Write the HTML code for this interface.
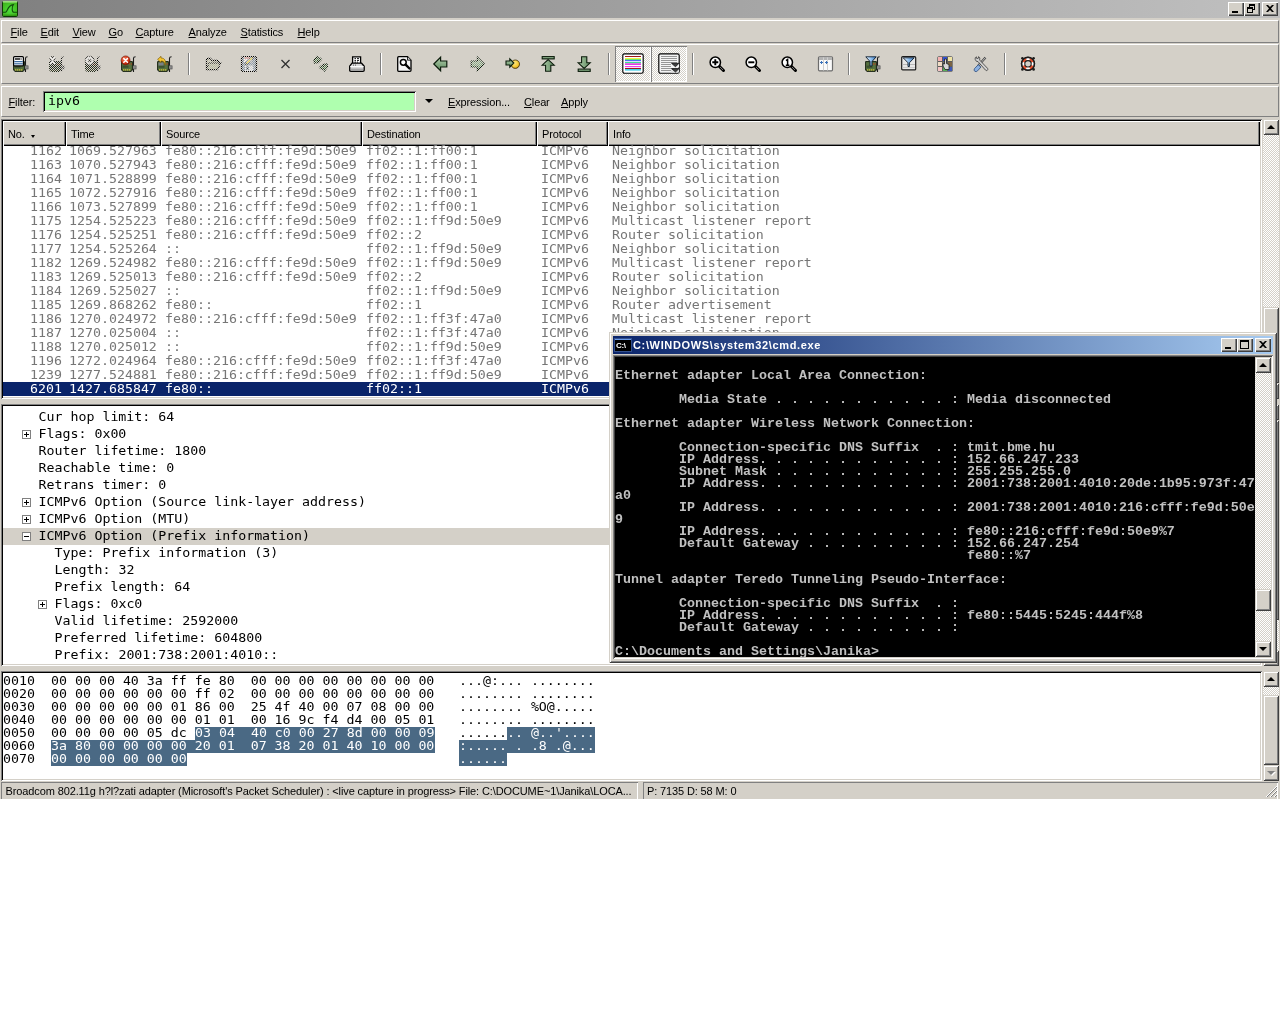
<!DOCTYPE html>
<html><head><meta charset="utf-8"><title>Wireshark</title>
<style>
*{box-sizing:border-box;margin:0;padding:0}
html,body{width:1280px;height:1024px;overflow:hidden;background:#fff}
#root{position:absolute;left:0;top:0;width:1280px;height:1024px;will-change:transform}
body{position:relative;font-family:"Liberation Sans",sans-serif;font-size:11px;color:#000}
.a{position:absolute}
.ui{font-family:"Liberation Sans",sans-serif;font-size:11px;line-height:13px;white-space:pre;letter-spacing:-.13px}
.mono{font-family:"DejaVu Sans Mono","Liberation Mono",monospace;font-size:13.288px;white-space:pre;line-height:14px;transform:scaleY(.9);transform-origin:0 50%}
.cmdt{font-family:"Liberation Mono",monospace;font-weight:bold;font-size:13.33px;line-height:12px;white-space:pre;color:#c0c0c0}
u{text-decoration:underline;text-underline-offset:1px}
.hl{position:absolute;height:1px;left:0;right:0}
.btn{background:#d4d0c8;box-shadow:inset 1px 1px 0 #fff,inset -1px -1px 0 #404040,inset -2px -2px 0 #808080}
.sbtn{background:#d4d0c8;box-shadow:inset 1px 1px 0 #d4d0c8,inset -1px -1px 0 #404040,inset 2px 2px 0 #fff,inset -2px -2px 0 #808080}
.chk{background-color:#fff;background-image:conic-gradient(#d4d0c8 25%,#fff 0 50%,#d4d0c8 0 75%,#fff 0);background-size:2px 2px}
.sunk{box-shadow:inset 1px 1px 0 #808080,inset -1px -1px 0 #fff,inset 2px 2px 0 #000,inset -2px -2px 0 #d4d0c8}
.hdr{position:absolute;top:121px;height:25px;background:#d4d0c8;box-shadow:inset 1px 1px 0 #fff,inset -1px -1px 0 #000,inset -2px -2px 0 #808080}
.hdr span{position:absolute;top:7px;left:5px}
.row{position:absolute;left:3px;width:1257px;height:14px;color:#767676}
.row span{position:absolute;top:0}
.tr{position:absolute;height:17px;line-height:17px;color:#000}
.exp{position:absolute;width:9px;height:9px;border:1px solid #808080;background:#fff}
.exp i{position:absolute;left:1px;top:3px;width:5px;height:1px;background:#000}
.exp b{position:absolute;left:3px;top:1px;width:1px;height:5px;background:#000}
.hx{position:absolute;height:13px;line-height:13px;color:#000}
.sel{background:#4a6984;color:#fff}
.sep{position:absolute;top:53px;width:2px;height:22px;border-left:1px solid #808080;border-right:1px solid #fff}
.ic{position:absolute;top:56px;width:16px;height:16px}
</style></head>
<body>
<div id="root">
<div class="a" style="left:0;top:0;width:1280px;height:799px;background:#d4d0c8"></div>
<div class="a" style="left:0;top:0;width:1280px;height:18px;background:linear-gradient(90deg,#808080,#c0c0c0)"></div>
<svg class="a" style="left:2px;top:1px" width="16" height="16" viewBox="0 0 16 16"><defs><radialGradient id="wsg" cx=".5" cy=".55" r=".6"><stop offset="0" stop-color="#4ee03c"/><stop offset="1" stop-color="#40b41c"/></radialGradient></defs><rect x=".5" y=".5" width="15" height="15" rx="1.2" fill="url(#wsg)" stroke="#0c3a04" stroke-width="1"/><rect x="1" y="0" width="14" height="1.6" fill="#9cdc80"/><rect x="1" y="13.600" width="14" height="1.400" fill="#2c8c10" opacity=".7"/><path d="M.5 11.300H3.500C5.500 11.300 5 4.500 11.300 3.600 9.500 6 10 11.300 11.800 11.300H15.500" fill="none" stroke="#14500c" stroke-width="1.100"/></svg>
<div class="a btn" style="left:1228px;top:2px;width:16px;height:14px"><div class="a" style="left:4px;top:9px;width:6px;height:2px;background:#000"></div></div>
<div class="a btn" style="left:1244px;top:2px;width:16px;height:14px"><div class="a" style="left:5px;top:2px;width:6px;height:6px;border:1px solid #000;border-top-width:2px"></div><div class="a" style="left:3px;top:5px;width:6px;height:6px;border:1px solid #000;border-top-width:2px;background:#d4d0c8"></div></div>
<div class="a btn" style="left:1262px;top:2px;width:16px;height:14px"><svg class="a" style="left:4px;top:3px" width="8" height="7" viewBox="0 0 8 7"><path d="M0 0h2l2 2 2-2h2L5 3.5 8 7H6L4 5 2 7H0l3-3.5z" fill="#000"/></svg></div>
<div class="a" style="left:1px;top:20px;width:1278px;height:23px;border-top:1px solid #fff;border-left:1px solid #fff;border-bottom:1px solid #808080;border-right:1px solid #808080"></div>
<div class="a" style="left:1px;top:44px;width:1278px;height:40px;border-top:1px solid #fff;border-left:1px solid #fff;border-bottom:1px solid #808080;border-right:1px solid #808080"></div>
<div class="a" style="left:1px;top:86px;width:1278px;height:31px;border-top:1px solid #fff;border-left:1px solid #fff;border-bottom:1px solid #808080;border-right:1px solid #808080"></div>
<div class="a ui" style="left:10.5px;top:26px"><u>F</u>ile</div>
<div class="a ui" style="left:40.5px;top:26px"><u>E</u>dit</div>
<div class="a ui" style="left:72.5px;top:26px"><u>V</u>iew</div>
<div class="a ui" style="left:108.5px;top:26px"><u>G</u>o</div>
<div class="a ui" style="left:135.5px;top:26px"><u>C</u>apture</div>
<div class="a ui" style="left:188.5px;top:26px"><u>A</u>nalyze</div>
<div class="a ui" style="left:240.5px;top:26px"><u>S</u>tatistics</div>
<div class="a ui" style="left:297.5px;top:26px"><u>H</u>elp</div>
<div class="sep" style="left:188px"></div>
<div class="sep" style="left:380px"></div>
<div class="sep" style="left:608px"></div>
<div class="sep" style="left:692px"></div>
<div class="sep" style="left:848px"></div>
<div class="sep" style="left:1004px"></div>
<div class="a chk" style="left:615px;top:46px;width:36px;height:36px;box-shadow:inset 1px 1px 0 #808080,inset -1px -1px 0 #fff"></div>
<div class="a chk" style="left:651px;top:46px;width:36px;height:36px;box-shadow:inset 1px 1px 0 #808080,inset -1px -1px 0 #fff"></div>
<svg class="a" style="left:0;top:44px" width="1280" height="40" viewBox="0 44 1280 40"><defs>
<pattern id="msk" width="2" height="2" patternUnits="userSpaceOnUse"><rect x="1" width="1" height="1" fill="#d4d0c8"/><rect y="1" width="1" height="1" fill="#d4d0c8"/></pattern>
<pattern id="stp" width="2" height="2" patternUnits="userSpaceOnUse"><rect width="1" height="1" fill="#2c2c2c"/><rect x="1" y="1" width="1" height="1" fill="#2c2c2c"/></pattern>
<pattern id="stg" width="2" height="2" patternUnits="userSpaceOnUse"><rect width="1" height="1" fill="#6f8f6f"/><rect x="1" y="1" width="1" height="1" fill="#6f8f6f"/></pattern>
<pattern id="stl" width="2" height="2" patternUnits="userSpaceOnUse"><rect width="2" height="2" fill="#e4e4dc"/><rect width="1" height="1" fill="#a8aca0"/><rect x="1" y="1" width="1" height="1" fill="#a8aca0"/></pattern>
<pattern id="stb" width="2" height="2" patternUnits="userSpaceOnUse"><rect width="2" height="2" fill="#dfe6ee"/><rect width="1" height="1" fill="#6c7c8c"/><rect x="1" y="1" width="1" height="1" fill="#6c7c8c"/></pattern>
<linearGradient id="gg" x1="0" y1="0" x2="0" y2="1"><stop offset="0" stop-color="#b4d0b0"/><stop offset=".5" stop-color="#86ab84"/><stop offset="1" stop-color="#5f8a60"/></linearGradient>
<linearGradient id="gh" x1="0" y1="0" x2="1" y2="0"><stop offset="0" stop-color="#b4d0b0"/><stop offset=".5" stop-color="#86ab84"/><stop offset="1" stop-color="#5f8a60"/></linearGradient>
<radialGradient id="rd" cx=".4" cy=".35" r=".7"><stop offset="0" stop-color="#f08060"/><stop offset=".6" stop-color="#d83818"/><stop offset="1" stop-color="#8a1808"/></radialGradient>
<radialGradient id="yl" cx=".4" cy=".35" r=".7"><stop offset="0" stop-color="#ffe880"/><stop offset=".7" stop-color="#f4c830"/><stop offset="1" stop-color="#b08010"/></radialGradient>
<linearGradient id="fl" x1="0" y1="0" x2="1" y2="0"><stop offset="0" stop-color="#f0f8ff"/><stop offset=".5" stop-color="#90c0f0"/><stop offset="1" stop-color="#3c7cc4"/></linearGradient>
<g id="nic">
 <path d="M12.5 16V2.2C12.5 1.2 13.3 .8 14.6 .8" fill="none" stroke="#1c1c1c" stroke-width="1.1"/>
 <rect x="10.5" y="9.8" width="4.6" height="3.2" fill="#8c8c8c" stroke="#4c4c4c" stroke-width=".6"/>
 <path d="M.6 5.6H11.4V14.2H10.2V15.4H1.8V14.2H.6Z" fill="#55703f" stroke="#1a2414" stroke-width="1"/>
 <rect x="1.5" y="9.6" width="6" height="2.2" fill="#3c5030"/>
 <rect x="8" y="7.4" width="1" height="1.2" fill="#c83c20"/><rect x="9.8" y="7.4" width="1" height="1.2" fill="#c83c20"/>
 <rect x="2" y="13.3" width="1.3" height="1.2" fill="#dcc83c"/><rect x="4" y="13.3" width="1.3" height="1.2" fill="#dcc83c"/><rect x="6" y="13.3" width="1.3" height="1.2" fill="#dcc83c"/><rect x="8" y="13.3" width="1.3" height="1.2" fill="#dcc83c"/>
</g>
<g id="nicd">
 <path d="M12.5 16V2.2C12.5 1.2 13.3 .8 14.6 .8" fill="none" stroke="#1c1c1c" stroke-width="1.1"/>
 <rect x="10.5" y="9.8" width="4.6" height="3.2" fill="#484848" stroke="#4c4c4c" stroke-width=".6"/>
 <path d="M.6 5.6H11.4V14.2H10.2V15.4H1.8V14.2H.6Z" fill="#2a3424" stroke="#1a2414" stroke-width="1"/>
 <rect x="1.5" y="9.6" width="6" height="2.2" fill="#1c2418"/>
 <rect x="8" y="7.4" width="1" height="1.2" fill="#7c2c1c"/><rect x="9.8" y="7.4" width="1" height="1.2" fill="#7c2c1c"/>
 <rect x="2" y="13.3" width="1.3" height="1.2" fill="#4c4828"/><rect x="4" y="13.3" width="1.3" height="1.2" fill="#4c4828"/><rect x="6" y="13.3" width="1.3" height="1.2" fill="#4c4828"/><rect x="8" y="13.3" width="1.3" height="1.2" fill="#4c4828"/>
</g>
</defs><g transform="translate(13,56)"><use href="#nic"/><rect x=".6" y=".6" width="9.8" height="9.3" rx="1" fill="#fff" stroke="#000" stroke-width="1.2"/><rect x="2" y="2" width="5.4" height="2" fill="#505050"/><rect x="8.2" y="2" width=".8" height="2" fill="#909090"/><rect x="1.2" y="5" width="8.6" height="1.2" fill="#3c6ca0"/><rect x="2" y="6.2" width="7" height=".9" fill="#c8d8e8"/><rect x="1.2" y="7.2" width="8.6" height="1.2" fill="#3c6ca0"/></g><g transform="translate(49,56)"><use href="#nicd"/><path d="M1.200 .8L5.800 8.200M5.600 .8L1.400 8.200" stroke="#202020" stroke-width="3"/><path d="M1.200 .8L5.800 8.200M5.600 .8L1.400 8.200" stroke="#f4f4f4" stroke-width="1.600"/><rect x="-1" y="-1" width="18" height="18" fill="url(#msk)"/></g><g transform="translate(85,56)"><use href="#nicd"/><circle cx="4.600" cy="4.600" r="4.400" fill="#e8e8e8" stroke="#202020" stroke-width="1"/><circle cx="4.600" cy="4.600" r="1.600" fill="#303030"/><rect x="-1" y="-1" width="18" height="18" fill="url(#msk)"/></g><g transform="translate(121,56)"><use href="#nic"/><circle cx="4.6" cy="4.4" r="4.5" fill="url(#rd)" stroke="#701808" stroke-width=".6"/><path d="M2.8 2.6L6.4 6.2M6.4 2.6L2.8 6.2" stroke="#fff" stroke-width="1.5" stroke-linecap="round"/></g><g transform="translate(157,56)"><use href="#nic"/><rect x="1.5" y="6.5" width="5" height="3" fill="#7a8088"/><path d="M.6 3.4L4 .3V2C7.5 2 9.2 4.5 8.2 9.2 7.8 6.2 6.4 5 4 5V6.6Z" fill="#f4c430" stroke="#80600c" stroke-width=".7" stroke-linejoin="round"/></g><g transform="translate(205,56)"><path d="M1.500 3.500Q1.500 2.500 2.500 2.500H5.500L7 4.500H12.500Q13.500 4.500 13.500 5.500V7H15.500L12.500 13.500H1.500Z" fill="#c8c8b0" stroke="#000" stroke-width="1.300"/><path d="M4 7H15.500L12.500 13.500H1.500Z" fill="#b4b89c" stroke="#101010" stroke-width="1"/><rect x="-1" y="-1" width="18" height="18" fill="url(#msk)"/></g><g transform="translate(241,56)"><rect x=".6" y=".6" width="14.800" height="14.800" rx="1.500" fill="#8c9cb0" stroke="#000" stroke-width="1.400"/><rect x="3" y="1.200" width="8" height="5" fill="#f4f4f4"/><path d="M3.500 2H9" stroke="#d04040" stroke-width="1"/><rect x="4" y="9.500" width="8" height="5.500" fill="#e4e8f0"/><rect x="5.500" y="10.500" width="2" height="3.500" fill="#2c3c4c"/><path d="M4.500 8.500L11.800 1.200" stroke="#202020" stroke-width="2.600"/><path d="M5.500 7.500L11.400 1.600" stroke="#f0d840" stroke-width="1"/><rect x="-1" y="-1" width="18" height="18" fill="url(#msk)"/></g><g transform="translate(277,56)"><path d="M4.500 4L12.500 12M12.500 4L4.500 12" stroke="#303030" stroke-width="1.300"/></g><g transform="translate(313,56)"><path d="M1 4L4 .5 5 2Q7.500 1.500 8.500 3.500L6.500 5.500Q5.500 4.500 4.500 5L5.500 6.500 1.500 7Z" fill="#5c8858" stroke="#081808" stroke-width="1.200"/><path d="M14.500 11L11.500 14.800 10.500 13Q8 13.500 6.500 11.500L8.500 9.500Q9.500 10.500 11 10L10 8.500 14 8Z" fill="#5c8858" stroke="#081808" stroke-width="1.200"/><rect x="-1" y="-1" width="18" height="18" fill="url(#msk)"/></g><g transform="translate(349,56)"><path d="M3.6 7V.8H11.6V7" fill="#fff" stroke="#000" stroke-width="1.3"/><path d="M5.5 2.6H7M8 2.6H10M5.5 4.4H7M8 4.4H10M5.500 6.1H7M8 6.1H9" stroke="#111" stroke-width="1"/><path d="M3 7.2H12.6L15.2 10.2V14.2Q15.2 15.3 14 15.3H1.8Q.7 15.3 .7 14.2V10.2Z" fill="#d8d8d8" stroke="#000" stroke-width="1.3" stroke-linejoin="round"/><path d="M1.2 10.6H14.6" stroke="#fff" stroke-width="1"/><path d="M2 13.2H14" stroke="#909090" stroke-width="1"/><rect x="4" y="8.6" width="1" height="1" fill="#555"/><rect x="6" y="8.600" width="1" height="1" fill="#555"/></g><g transform="translate(397,56)"><path d="M1.7.7H10.5L14 4.200V14.300Q14 15.300 13 15.300H1.700Q.7 15.300 .7 14.300V1.700Q.7.7 1.7.7Z" fill="#f4f4f4" stroke="#000" stroke-width="1.3"/><path d="M10.500 .7V4.200H14" fill="#ccc" stroke="#000" stroke-width=".8"/><circle cx="6.300" cy="6.300" r="2.900" fill="#fff" stroke="#000" stroke-width="1.500"/><path d="M8.600 8.600L12.500 12.500" stroke="#000" stroke-width="2.400" stroke-linecap="round"/></g><g transform="translate(433,56)"><path d="M.8 8L7.600 1.300V5H13.800V11H7.600V14.700Z" fill="url(#gg)" stroke="#0c1c0c" stroke-width="1.200" stroke-linejoin="miter"/></g><g transform="translate(469,56)"><path d="M15.200 8L8.400 1.300V5H2.200V11H8.400V14.700Z" fill="url(#gg)" stroke="#0c1c0c" stroke-width="1.200"/><rect x="-1" y="-1" width="18" height="18" fill="url(#msk)"/></g><g transform="translate(505,56)"><circle cx="10.300" cy="8.200" r="4.200" fill="url(#yl)" stroke="#3c2c04" stroke-width=".8"/><path d="M8.800 7L4.800 2.800V5H1V9H4.800V11.200Z" fill="url(#gg)" stroke="#0c1c0c" stroke-width="1.100"/></g><g transform="translate(541,56)"><rect x="1.200" y=".6" width="12" height="2.300" fill="url(#gg)" stroke="#0c1c0c" stroke-width="1.100"/><path d="M7.200 3.600L13.200 9.200H9.800V15.300H4.600V9.200H1.200Z" fill="url(#gh)" stroke="#0c1c0c" stroke-width="1.100"/></g><g transform="translate(577,56)"><rect x="1.200" y="13.100" width="12" height="2.300" fill="url(#gg)" stroke="#0c1c0c" stroke-width="1.100"/><path d="M7.200 12.400L13.200 6.800H9.800V.7H4.600V6.800H1.200Z" fill="url(#gh)" stroke="#0c1c0c" stroke-width="1.100"/></g><g transform="translate(622,53)"><rect x=".8" y=".8" width="20.400" height="19.400" rx="1.600" fill="#fff" stroke="#000" stroke-width="1.150"/><rect x="3" y="3" width="16" height="1" fill="#a01818"/><rect x="3" y="5" width="16" height="1.3" fill="#f0f040"/><rect x="3" y="6.2" width="16" height="1" fill="#40e060"/><rect x="3" y="7.1" width="16" height="1.1" fill="#4060f0"/><rect x="3" y="9" width="16" height="1.2" fill="#40e090"/><rect x="3" y="10.3" width="16" height="1.7" fill="#e040e0"/><rect x="3" y="13" width="16" height="1.2" fill="#f040f0"/><rect x="3" y="15" width="16" height="1" fill="#a01818"/><rect x="3" y="16" width="16" height="1.6" fill="#40d0e8"/></g><g transform="translate(658,53)"><rect x=".8" y=".8" width="20.400" height="19.400" rx="1.600" fill="#f4f4f4" stroke="#000" stroke-width="1.150"/><rect x="3" y="3" width="16" height=".9" fill="#8c8c8c"/><rect x="3" y="5" width="16" height=".9" fill="#8c8c8c"/><rect x="3" y="7" width="16" height=".9" fill="#8c8c8c"/><rect x="3" y="9" width="16" height=".9" fill="#8c8c8c"/><rect x="3" y="11" width="16" height=".9" fill="#8c8c8c"/><rect x="3" y="13" width="16" height=".9" fill="#8c8c8c"/><rect x="3" y="15" width="16" height=".9" fill="#8c8c8c"/><rect x="3" y="17" width="16" height=".9" fill="#8c8c8c"/><rect x="13" y="10" width="8" height="4" fill="#f4f4f4"/><rect x="13" y="15.500" width="8" height="4" fill="#e0e0e0"/><path d="M13.500 10.300H21L17.500 13.800Z" fill="#404040" stroke="#000" stroke-width=".7"/><path d="M13.500 15.600H21L17.500 19Z" fill="#404040" stroke="#000" stroke-width=".7"/></g><g transform="translate(709,56)"><path d="M10 10L14.500 14.500" stroke="#000" stroke-width="3" stroke-linecap="round"/><path d="M11 11L14 14" stroke="#777" stroke-width="1"/><circle cx="6.300" cy="6.300" r="5.200" fill="#fff" stroke="#000" stroke-width="1.500"/><path d="M3.300 6.300H9.300M6.300 3.300V9.300" stroke="#000" stroke-width="1.900"/></g><g transform="translate(745,56)"><path d="M10 10L14.500 14.500" stroke="#000" stroke-width="3" stroke-linecap="round"/><path d="M11 11L14 14" stroke="#777" stroke-width="1"/><circle cx="6.300" cy="6.300" r="5.200" fill="#fff" stroke="#000" stroke-width="1.500"/><path d="M3.300 6.300H9.300" stroke="#000" stroke-width="1.900"/></g><g transform="translate(781,56)"><path d="M10 10L14.500 14.500" stroke="#000" stroke-width="3" stroke-linecap="round"/><path d="M11 11L14 14" stroke="#777" stroke-width="1"/><circle cx="6.300" cy="6.300" r="5.200" fill="#fff" stroke="#000" stroke-width="1.500"/><path d="M5 4.600L6.600 3.400V9.300M4.800 9.300H8.400" stroke="#000" stroke-width="1.500" fill="none"/></g><g transform="translate(817,56)"><rect x="1.500" y=".8" width="14" height="14" rx="1" fill="#fafafa" stroke="#6c6c6c" stroke-width="1.200"/><rect x="2" y="1.400" width="13" height="2.600" fill="#b4b4b4"/><path d="M6.500 1.400V14.500M10.500 1.400V14.500" stroke="#d0d0d0" stroke-width="1"/><path d="M3 6.500H6M4.500 5V8M8 6.500H11M9.500 5V8" stroke="#3870b8" stroke-width="1"/></g><g transform="translate(865,56)"><use href="#nic"/><path d="M.8 .8H11.200L7 5.500V10H5V5.500Z" fill="url(#fl)" stroke="#0c1c2c" stroke-width=".9" stroke-linejoin="round"/></g><g transform="translate(901,56)"><rect x=".7" y=".7" width="14" height="13.200" rx="1" fill="#e8e8e8" stroke="#1c1c1c" stroke-width="1.200"/><rect x="1.500" y="8" width="12.400" height="1" fill="#b8b8b8"/><rect x="1.500" y="11" width="12.400" height="1" fill="#c8c8c8"/><path d="M2.200 1.800H13.200L8.400 6.800V10.500H7V6.800Z" fill="url(#fl)" stroke="#0c1c2c" stroke-width=".9" stroke-linejoin="round"/></g><g transform="translate(937,56)"><rect x=".3" y=".3" width="15.400" height="15.400" rx="1.500" fill="#5c5c5c"/><rect x="1" y="1" width="4" height="4" fill="#f4b0b0"/><rect x="6" y="1" width="4" height="4" fill="#3454d8"/><rect x="11" y="1" width="4" height="4" fill="#f0e4a4"/><rect x="1" y="6" width="4" height="4" fill="#f0dcc4"/><rect x="6" y="6" width="4" height="4" fill="#707070"/><rect x="11" y="6" width="4" height="4" fill="#7c6444"/><rect x="1" y="11" width="4" height="4" fill="#f4c4c4"/><rect x="6" y="11" width="4" height="4" fill="#58b058"/><rect x="11" y="11" width="4" height="4" fill="#3c58b8"/><path d="M7.500 3V8L6 7.500V10L8 13.500H12V8.500L9.500 7.500V3Z" fill="#d8d8d8" stroke="#222" stroke-width=".8"/></g><g transform="translate(973,56)"><path d="M12.500 1.500L5 10" stroke="#444" stroke-width="2.200"/><path d="M12.500 1.500L5 10" stroke="#c8c8c8" stroke-width=".9"/><path d="M5.200 8.800L1.500 12.600Q.4 14.200 1.800 15.300 3.300 16.200 4.600 14.800L8 11Z" fill="#8cb0e0" stroke="#2c4c7c" stroke-width=".8"/><path d="M2.200 3.400Q1.600 1.600 3.400 .8L3.800 2.600 5.400 2.200 5.600 .6Q7.600 1.600 6.600 4L14.600 12.400Q15.200 13.600 14.200 14.400 13.200 15 12.400 14L5 5.600Q3 6 2.200 3.400Z" fill="#d0d0d0" stroke="#3c3c3c" stroke-width=".8"/></g><g transform="translate(1020,56)"><circle cx="8" cy="7.800" r="6.500" fill="#fff" stroke="#1c1c1c" stroke-width="1.400"/><path d="M14.07 10.13A6.5 6.5 0 0 1 10.33 13.87L9.15 10.79A3.2 3.2 0 0 0 10.99 8.95ZM5.67 13.87A6.5 6.5 0 0 1 1.93 10.13L5.01 8.95A3.2 3.2 0 0 0 6.85 10.79ZM1.93 5.47A6.5 6.5 0 0 1 5.67 1.73L6.85 4.81A3.2 3.2 0 0 0 5.01 6.65ZM10.33 1.73A6.5 6.5 0 0 1 14.07 5.47L10.99 6.65A3.2 3.2 0 0 0 9.15 4.81Z" fill="#e8502c"/><circle cx="8" cy="7.800" r="6.500" fill="none" stroke="#1c1c1c" stroke-width="1.300"/><circle cx="8" cy="7.800" r="3.200" fill="#d4d0c8" stroke="#1c1c1c" stroke-width="1.100"/><circle cx="2.400" cy="2.200" r="1.300" fill="#1c1c1c"/><circle cx="13.600" cy="2.200" r="1.300" fill="#1c1c1c"/><circle cx="2.400" cy="13.400" r="1.300" fill="#1c1c1c"/><circle cx="13.600" cy="13.400" r="1.300" fill="#1c1c1c"/></g></svg>
<div class="a ui" style="left:8.5px;top:96px"><u>F</u>ilter:</div>
<div class="a" style="left:43px;top:91px;width:373px;height:21px;background:#afffaf;box-shadow:inset 1px 1px 0 #808080,inset -1px -1px 0 #fff,inset 2px 2px 0 #000,inset -2px -2px 0 #d4d0c8"></div>
<div class="a mono" style="left:48px;top:93px;line-height:16px">ipv6</div>
<div class="a" style="left:425px;top:99px;width:0;height:0;border-left:4px solid transparent;border-right:4px solid transparent;border-top:4px solid #000"></div>
<div class="a ui" style="left:448px;top:96px"><u>E</u>xpression...</div>
<div class="a ui" style="left:524px;top:96px"><u>C</u>lear</div>
<div class="a ui" style="left:561px;top:96px"><u>A</u>pply</div>
<div class="a sunk" style="left:1px;top:119px;width:1261px;height:280px;background:#fff"></div>
<div class="hdr ui" style="left:3px;width:63px"><span>No. </span></div>
<div class="hdr ui" style="left:66px;width:95px"><span>Time</span></div>
<div class="hdr ui" style="left:161px;width:201px"><span>Source</span></div>
<div class="hdr ui" style="left:362px;width:175px"><span>Destination</span></div>
<div class="hdr ui" style="left:537px;width:71px"><span>Protocol</span></div>
<div class="hdr ui" style="left:608px;width:652px"><span>Info</span></div>
<div class="a" style="left:31px;top:135px;width:0;height:0;border-left:2.5px solid transparent;border-right:2.5px solid transparent;border-top:3px solid #000"></div>
<div class="row mono" style="top:144px;"><span style="left:27px">1162</span><span style="left:66px">1069.527963</span><span style="left:162px">fe80::216:cfff:fe9d:50e9</span><span style="left:363px">ff02::1:ff00:1</span><span style="left:538px">ICMPv6</span><span style="left:609px">Neighbor solicitation</span></div>
<div class="row mono" style="top:158px;"><span style="left:27px">1163</span><span style="left:66px">1070.527943</span><span style="left:162px">fe80::216:cfff:fe9d:50e9</span><span style="left:363px">ff02::1:ff00:1</span><span style="left:538px">ICMPv6</span><span style="left:609px">Neighbor solicitation</span></div>
<div class="row mono" style="top:172px;"><span style="left:27px">1164</span><span style="left:66px">1071.528899</span><span style="left:162px">fe80::216:cfff:fe9d:50e9</span><span style="left:363px">ff02::1:ff00:1</span><span style="left:538px">ICMPv6</span><span style="left:609px">Neighbor solicitation</span></div>
<div class="row mono" style="top:186px;"><span style="left:27px">1165</span><span style="left:66px">1072.527916</span><span style="left:162px">fe80::216:cfff:fe9d:50e9</span><span style="left:363px">ff02::1:ff00:1</span><span style="left:538px">ICMPv6</span><span style="left:609px">Neighbor solicitation</span></div>
<div class="row mono" style="top:200px;"><span style="left:27px">1166</span><span style="left:66px">1073.527899</span><span style="left:162px">fe80::216:cfff:fe9d:50e9</span><span style="left:363px">ff02::1:ff00:1</span><span style="left:538px">ICMPv6</span><span style="left:609px">Neighbor solicitation</span></div>
<div class="row mono" style="top:214px;"><span style="left:27px">1175</span><span style="left:66px">1254.525223</span><span style="left:162px">fe80::216:cfff:fe9d:50e9</span><span style="left:363px">ff02::1:ff9d:50e9</span><span style="left:538px">ICMPv6</span><span style="left:609px">Multicast listener report</span></div>
<div class="row mono" style="top:228px;"><span style="left:27px">1176</span><span style="left:66px">1254.525251</span><span style="left:162px">fe80::216:cfff:fe9d:50e9</span><span style="left:363px">ff02::2</span><span style="left:538px">ICMPv6</span><span style="left:609px">Router solicitation</span></div>
<div class="row mono" style="top:242px;"><span style="left:27px">1177</span><span style="left:66px">1254.525264</span><span style="left:162px">::</span><span style="left:363px">ff02::1:ff9d:50e9</span><span style="left:538px">ICMPv6</span><span style="left:609px">Neighbor solicitation</span></div>
<div class="row mono" style="top:256px;"><span style="left:27px">1182</span><span style="left:66px">1269.524982</span><span style="left:162px">fe80::216:cfff:fe9d:50e9</span><span style="left:363px">ff02::1:ff9d:50e9</span><span style="left:538px">ICMPv6</span><span style="left:609px">Multicast listener report</span></div>
<div class="row mono" style="top:270px;"><span style="left:27px">1183</span><span style="left:66px">1269.525013</span><span style="left:162px">fe80::216:cfff:fe9d:50e9</span><span style="left:363px">ff02::2</span><span style="left:538px">ICMPv6</span><span style="left:609px">Router solicitation</span></div>
<div class="row mono" style="top:284px;"><span style="left:27px">1184</span><span style="left:66px">1269.525027</span><span style="left:162px">::</span><span style="left:363px">ff02::1:ff9d:50e9</span><span style="left:538px">ICMPv6</span><span style="left:609px">Neighbor solicitation</span></div>
<div class="row mono" style="top:298px;"><span style="left:27px">1185</span><span style="left:66px">1269.868262</span><span style="left:162px">fe80::</span><span style="left:363px">ff02::1</span><span style="left:538px">ICMPv6</span><span style="left:609px">Router advertisement</span></div>
<div class="row mono" style="top:312px;"><span style="left:27px">1186</span><span style="left:66px">1270.024972</span><span style="left:162px">fe80::216:cfff:fe9d:50e9</span><span style="left:363px">ff02::1:ff3f:47a0</span><span style="left:538px">ICMPv6</span><span style="left:609px">Multicast listener report</span></div>
<div class="row mono" style="top:326px;"><span style="left:27px">1187</span><span style="left:66px">1270.025004</span><span style="left:162px">::</span><span style="left:363px">ff02::1:ff3f:47a0</span><span style="left:538px">ICMPv6</span><span style="left:609px">Neighbor solicitation</span></div>
<div class="row mono" style="top:340px;"><span style="left:27px">1188</span><span style="left:66px">1270.025012</span><span style="left:162px">::</span><span style="left:363px">ff02::1:ff9d:50e9</span><span style="left:538px">ICMPv6</span><span style="left:609px">Neighbor solicitation</span></div>
<div class="row mono" style="top:354px;"><span style="left:27px">1196</span><span style="left:66px">1272.024964</span><span style="left:162px">fe80::216:cfff:fe9d:50e9</span><span style="left:363px">ff02::1:ff3f:47a0</span><span style="left:538px">ICMPv6</span><span style="left:609px">Multicast listener report</span></div>
<div class="row mono" style="top:368px;"><span style="left:27px">1239</span><span style="left:66px">1277.524881</span><span style="left:162px">fe80::216:cfff:fe9d:50e9</span><span style="left:363px">ff02::1:ff9d:50e9</span><span style="left:538px">ICMPv6</span><span style="left:609px">Neighbor solicitation</span></div>
<div class="a" style="left:3px;top:382px;width:1257px;height:14px;background:#0a246a"></div>
<div class="row mono" style="top:382px;color:#fff;"><span style="left:27px">6201</span><span style="left:66px">1427.685847</span><span style="left:162px">fe80::</span><span style="left:363px">ff02::1</span><span style="left:538px">ICMPv6</span><span style="left:609px">Router advertisement</span></div>
<div class="a chk" style="left:1263px;top:119px;width:16px;height:280px"></div><div class="a sbtn" style="left:1263px;top:119px;width:16px;height:16px"><div class="a" style="left:4px;top:6px;width:0;height:0;border-left:4px solid transparent;border-right:4px solid transparent;border-bottom:4px solid #000"></div></div><div class="a sbtn" style="left:1263px;top:383px;width:16px;height:16px"><div class="a" style="left:4px;top:6px;width:0;height:0;border-left:4px solid transparent;border-right:4px solid transparent;border-top:4px solid #000"></div></div><div class="a sbtn" style="left:1263px;top:307px;width:16px;height:76px"></div>
<div class="a sunk" style="left:1px;top:404px;width:1261px;height:262px;background:#fff"></div>
<div class="a" style="left:3px;top:528px;width:1257px;height:17px;background:#d4d0c8"></div>
<div class="tr mono" style="left:38.5px;top:408px;line-height:17px">Cur hop limit: 64</div>
<div class="tr mono" style="left:38.5px;top:425px;line-height:17px">Flags: 0x00</div>
<div class="exp" style="left:22px;top:430px"><i></i><b></b></div>
<div class="tr mono" style="left:38.5px;top:442px;line-height:17px">Router lifetime: 1800</div>
<div class="tr mono" style="left:38.5px;top:459px;line-height:17px">Reachable time: 0</div>
<div class="tr mono" style="left:38.5px;top:476px;line-height:17px">Retrans timer: 0</div>
<div class="tr mono" style="left:38.5px;top:493px;line-height:17px">ICMPv6 Option (Source link-layer address)</div>
<div class="exp" style="left:22px;top:498px"><i></i><b></b></div>
<div class="tr mono" style="left:38.5px;top:510px;line-height:17px">ICMPv6 Option (MTU)</div>
<div class="exp" style="left:22px;top:515px"><i></i><b></b></div>
<div class="tr mono" style="left:38.5px;top:527px;line-height:17px">ICMPv6 Option (Prefix information)</div>
<div class="exp" style="left:22px;top:532px"><i></i></div>
<div class="tr mono" style="left:54.5px;top:544px;line-height:17px">Type: Prefix information (3)</div>
<div class="tr mono" style="left:54.5px;top:561px;line-height:17px">Length: 32</div>
<div class="tr mono" style="left:54.5px;top:578px;line-height:17px">Prefix length: 64</div>
<div class="tr mono" style="left:54.5px;top:595px;line-height:17px">Flags: 0xc0</div>
<div class="exp" style="left:38px;top:600px"><i></i><b></b></div>
<div class="tr mono" style="left:54.5px;top:612px;line-height:17px">Valid lifetime: 2592000</div>
<div class="tr mono" style="left:54.5px;top:629px;line-height:17px">Preferred lifetime: 604800</div>
<div class="tr mono" style="left:54.5px;top:646px;line-height:17px">Prefix: 2001:738:2001:4010::</div>
<div class="a chk" style="left:1263px;top:404px;width:16px;height:262px"></div><div class="a sbtn" style="left:1263px;top:404px;width:16px;height:16px"><div class="a" style="left:4px;top:6px;width:0;height:0;border-left:4px solid transparent;border-right:4px solid transparent;border-bottom:4px solid #000"></div></div><div class="a sbtn" style="left:1263px;top:650px;width:16px;height:16px"><div class="a" style="left:4px;top:6px;width:0;height:0;border-left:4px solid transparent;border-right:4px solid transparent;border-top:4px solid #000"></div></div><div class="a sbtn" style="left:1263px;top:420px;width:16px;height:200px"></div>
<div class="a sunk" style="left:1px;top:671px;width:1261px;height:110px;background:#fff"></div>
<div class="hx mono" style="left:3px;top:674px">0010</div>
<div class="hx mono" style="left:51px;top:674px">00 00 00 40 3a ff fe 80  00 00 00 00 00 00 00 00</div>
<div class="hx mono" style="left:459px;top:674px">...@:... ........</div>
<div class="hx mono" style="left:3px;top:687px">0020</div>
<div class="hx mono" style="left:51px;top:687px">00 00 00 00 00 00 ff 02  00 00 00 00 00 00 00 00</div>
<div class="hx mono" style="left:459px;top:687px">........ ........</div>
<div class="hx mono" style="left:3px;top:700px">0030</div>
<div class="hx mono" style="left:51px;top:700px">00 00 00 00 00 01 86 00  25 4f 40 00 07 08 00 00</div>
<div class="hx mono" style="left:459px;top:700px">........ %O@.....</div>
<div class="hx mono" style="left:3px;top:713px">0040</div>
<div class="hx mono" style="left:51px;top:713px">00 00 00 00 00 00 01 01  00 16 9c f4 d4 00 05 01</div>
<div class="hx mono" style="left:459px;top:713px">........ ........</div>
<div class="hx mono" style="left:3px;top:726px">0050</div>
<div class="a" style="left:195px;top:727px;width:240px;height:13px;background:#4a6984"></div><div class="hx mono" style="left:51px;top:726px">00 00 00 00 05 dc </div><div class="hx mono" style="left:195px;top:726px;color:#fff">03 04  40 c0 00 27 8d 00 00 09</div>
<div class="a" style="left:507px;top:727px;width:88px;height:13px;background:#4a6984"></div><div class="hx mono" style="left:459px;top:726px">......</div><div class="hx mono" style="left:507px;top:726px;color:#fff">.. @..&#x27;....</div>
<div class="hx mono" style="left:3px;top:739px">0060</div>
<div class="a" style="left:51px;top:740px;width:384px;height:13px;background:#4a6984"></div><div class="hx mono" style="left:51px;top:739px;color:#fff">3a 80 00 00 00 00 20 01  07 38 20 01 40 10 00 00</div>
<div class="a" style="left:459px;top:740px;width:136px;height:13px;background:#4a6984"></div><div class="hx mono" style="left:459px;top:739px;color:#fff">:..... . .8 .@...</div>
<div class="hx mono" style="left:3px;top:752px">0070</div>
<div class="a" style="left:51px;top:753px;width:136px;height:13px;background:#4a6984"></div><div class="hx mono" style="left:51px;top:752px;color:#fff">00 00 00 00 00 00</div>
<div class="a" style="left:459px;top:753px;width:48px;height:13px;background:#4a6984"></div><div class="hx mono" style="left:459px;top:752px;color:#fff">......</div>
<div class="a chk" style="left:1263px;top:671px;width:16px;height:110px"></div><div class="a sbtn" style="left:1263px;top:671px;width:16px;height:16px"><div class="a" style="left:4px;top:6px;width:0;height:0;border-left:4px solid transparent;border-right:4px solid transparent;border-bottom:4px solid #000"></div></div><div class="a sbtn" style="left:1263px;top:765px;width:16px;height:16px"><div class="a" style="left:5px;top:7px;width:0;height:0;border-left:4px solid transparent;border-right:4px solid transparent;border-top:4px solid #fff"></div><div class="a" style="left:4px;top:6px;width:0;height:0;border-left:4px solid transparent;border-right:4px solid transparent;border-top:4px solid #808080"></div></div><div class="a sbtn" style="left:1263px;top:695px;width:16px;height:70px"></div>
<div class="a" style="left:1px;top:782px;width:637px;height:17px;box-shadow:inset 1px 1px 0 #808080,inset -1px 0 0 #fff"></div>
<div class="a" style="left:643px;top:782px;width:635px;height:17px;box-shadow:inset 1px 1px 0 #808080,inset -1px 0 0 #fff"></div>
<div class="a ui" style="left:5.5px;top:785px;letter-spacing:-.115px">Broadcom 802.11g h?l?zati adapter (Microsoft&#x27;s Packet Scheduler) : &lt;live capture in progress&gt; File: C:\DOCUME~1\Janika\LOCA...</div>
<div class="a ui" style="left:647px;top:785px">P: 7135 D: 58 M: 0</div>
<svg class="a" style="left:1266px;top:786px" width="12" height="12" viewBox="0 0 12 12"><path d="M11 1L1 11M11 5L5 11M11 9L9 11" stroke="#808080" stroke-width="1"/><path d="M11 0L0 11M11 4L4 11M11 8L8 11" stroke="#fff" stroke-width="1"/></svg>
<!--CMD-->
<div class="a" style="left:609px;top:332px;width:668px;height:331px;background:#d4d0c8;box-shadow:inset 1px 1px 0 #d4d0c8,inset -1px -1px 0 #404040,inset 2px 2px 0 #fff,inset -2px -2px 0 #808080"><div class="a" style="left:4px;top:4px;width:660px;height:18px;background:linear-gradient(90deg,#0a246a,#a6caf0)"></div><div class="a" style="left:6px;top:7px;width:16px;height:12px;background:#000;border-top:1px solid #6a9ae8;box-shadow:0 0 0 1px #33508c"><span class="a" style="left:1px;top:1px;font:bold 8px/9px 'Liberation Sans',sans-serif;color:#fff;letter-spacing:-.3px">C:\</span></div><div class="a" style="left:24px;top:6px;font:bold 11px/14px 'Liberation Sans',sans-serif;color:#fff;white-space:pre;letter-spacing:.65px">C:\WINDOWS\system32\cmd.exe</div><div class="a btn" style="left:612px;top:6px;width:16px;height:14px"><div class="a" style="left:4px;top:9px;width:6px;height:2px;background:#000"></div></div><div class="a btn" style="left:628px;top:6px;width:16px;height:14px"><div class="a" style="left:3px;top:2px;width:9px;height:9px;border:1px solid #000;border-top-width:2px"></div></div><div class="a btn" style="left:646px;top:6px;width:16px;height:14px"><svg class="a" style="left:4px;top:3px" width="8" height="7" viewBox="0 0 8 7"><path d="M0 0h2l2 2 2-2h2L5 3.5 8 7H6L4 5 2 7H0l3-3.5z" fill="#000"/></svg></div><div class="a" style="left:4px;top:23px;width:660px;height:304px;background:#000;box-shadow:inset 1px 1px 0 #808080,inset -1px -1px 0 #fff,inset 2px 2px 0 #404040,inset -2px -2px 0 #d4d0c8"></div><div class="a cmdt" style="left:6px;top:26px;width:640px;height:300px;overflow:hidden">
Ethernet adapter Local Area Connection:

        Media State . . . . . . . . . . . : Media disconnected

Ethernet adapter Wireless Network Connection:

        Connection-specific DNS Suffix  . : tmit.bme.hu
        IP Address. . . . . . . . . . . . : 152.66.247.233
        Subnet Mask . . . . . . . . . . . : 255.255.255.0
        IP Address. . . . . . . . . . . . : 2001:738:2001:4010:20de:1b95:973f:47
a0
        IP Address. . . . . . . . . . . . : 2001:738:2001:4010:216:cfff:fe9d:50e
9
        IP Address. . . . . . . . . . . . : fe80::216:cfff:fe9d:50e9%7
        Default Gateway . . . . . . . . . : 152.66.247.254
                                            fe80::%7

Tunnel adapter Teredo Tunneling Pseudo-Interface:

        Connection-specific DNS Suffix  . : 
        IP Address. . . . . . . . . . . . : fe80::5445:5245:444f%8
        Default Gateway . . . . . . . . . : 

C:\Documents and Settings\Janika&gt;</div></div>
<div class="a chk" style="left:1255px;top:357px;width:16px;height:300px"></div><div class="a sbtn" style="left:1255px;top:357px;width:16px;height:16px"><div class="a" style="left:4px;top:6px;width:0;height:0;border-left:4px solid transparent;border-right:4px solid transparent;border-bottom:4px solid #000"></div></div><div class="a sbtn" style="left:1255px;top:641px;width:16px;height:16px"><div class="a" style="left:4px;top:6px;width:0;height:0;border-left:4px solid transparent;border-right:4px solid transparent;border-top:4px solid #000"></div></div><div class="a sbtn" style="left:1255px;top:589px;width:16px;height:22px"></div>
</div>
</body></html>
